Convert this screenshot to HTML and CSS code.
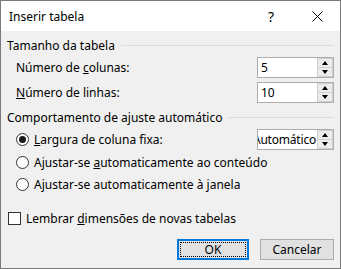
FILE: index.html
```html
<!DOCTYPE html>
<html lang="pt">
<head>
  <meta charset="UTF-8">
  <title>Inserir tabela</title>
  <link rel="stylesheet" href="styles.css">
</head>
<body>
  <div class="dialog">
    <div class="titlebar">
      <span class="title">Inserir tabela</span>
      <span class="cap-btn">?</span>
      <span class="cap-btn">
        <svg width="11" height="11" viewBox="0 0 11 11"><path d="M0.5 0.5 L10.5 10.5 M10.5 0.5 L0.5 10.5" stroke="#000" stroke-width="1" fill="none"/></svg>
      </span>
    </div>

    <div class="content">
      <div class="group-head first"><span>Tamanho da tabela</span><i class="rule"></i></div>
      <div class="row r-cols">
        <span class="label">Número de <u>c</u>olunas:</span>
        <div class="spin"><span class="val">5</span><span class="arrows"><b class="up"></b><b class="down"></b></span></div>
      </div>
      <div class="row r-rows">
        <span class="label"><u>N</u>úmero de linhas:</span>
        <div class="spin"><span class="val">10</span><span class="arrows"><b class="up"></b><b class="down"></b></span></div>
      </div>

      <div class="group-head second"><span>Comportamento de ajuste automático</span><i class="rule"></i></div>
      <div class="row r-opt1">
        <span class="option"><i class="radio checked"></i><span><u>L</u>argura de coluna fixa:</span></span>
        <div class="spin"><span class="val clip"><span>Automático</span></span><span class="arrows"><b class="up"></b><b class="down"></b></span></div>
      </div>
      <div class="row r-opt2">
        <span class="option"><i class="radio"></i><span>Ajustar-se <u>a</u>utomaticamente ao conteúdo</span></span>
      </div>
      <div class="row r-opt3">
        <span class="option"><i class="radio"></i><span>Ajustar-se automaticamente à <u>j</u>anela</span></span>
      </div>

      <div class="row r-check">
        <span class="option"><i class="check"></i><span>Lembrar <u>d</u>imensões de novas tabelas</span></span>
      </div>

      <div class="buttons">
        <button class="btn default"><span>OK</span></button>
        <button class="btn">Cancelar</button>
      </div>
    </div>
  </div>
</body>
</html>
```

FILE: styles.css
```css
body { margin: 0; font-family: "Noto Sans", sans-serif; font-size: 12px; color: #000; background: #fff; }
.dialog { width: 341px; height: 269px; box-sizing: border-box; border: 1px solid #7a7a7a; background: #f0f0f0; display: flex; flex-direction: column; }
.titlebar { height: 30px; background: #fff; display: flex; align-items: center; flex-shrink: 0; }
.title { flex: 1; padding-left: 8px; font-size: 12px; }
.cap-btn { width: 46px; height: 30px; display: flex; align-items: center; justify-content: center; font-size: 14px; }
.content { padding: 0 6px 0 6px; display: flex; flex-direction: column; }
.group-head { display: flex; align-items: center; height: 16px; gap: 6px; }
.group-head.first { margin-top: 6px; }
.group-head.second { margin-top: 6px; }
.rule { flex: 1; border-top: 1px solid #dcdcdc; margin-top: 0; }
.row { display: flex; align-items: center; justify-content: space-between; height: 21px; }
.label { padding-left: 9px; }
.r-cols { margin-top: 4px; }
.r-rows { margin-top: 4px; }
.r-opt1 { margin-top: 4px; }
.r-opt2 { margin-top: 2px; }
.r-opt3 { margin-top: 1px; }
.r-check { margin-top: 13px; }
.option { display: flex; align-items: center; padding-left: 9px; }
.r-check .option { padding-left: 1px; }
.radio { width: 11px; height: 11px; border: 1px solid #333; border-radius: 50%; background: #fff; margin-right: 5px; display: flex; align-items: center; justify-content: center; }
.radio.checked::after { content: ""; width: 7px; height: 7px; border-radius: 50%; background: #1a1a1a; }
.check { width: 11px; height: 11px; border: 1px solid #333; background: #fff; margin-right: 5px; }
.spin { width: 77px; height: 21px; box-sizing: border-box; border: 1px solid #adadad; background: #fff; display: flex; }
.val { flex: 1; padding-left: 3px; line-height: 19px; overflow: hidden; white-space: nowrap; }
.val.clip { display: flex; justify-content: flex-end; padding-left: 0; padding-right: 0; letter-spacing: -0.2px; }
.arrows { width: 16px; display: flex; flex-direction: column; background: #f0f0f0; border-left: 1px solid #fff; }
.arrows b { flex: 1; border: 1px solid #cfcfcf; background: #ececec; display: flex; align-items: center; justify-content: center; }
.arrows b + b { border-top: none; }
.up::after { content: ""; border-left: 3px solid transparent; border-right: 3px solid transparent; border-bottom: 4px solid #000; }
.down::after { content: ""; border-left: 3px solid transparent; border-right: 3px solid transparent; border-top: 4px solid #000; }
.buttons { display: flex; justify-content: flex-end; gap: 11px; margin-top: 10px; }
.btn { font-family: "Noto Sans", sans-serif; font-size: 12px; width: 74px; height: 21px; box-sizing: border-box; border: 1px solid #adadad; background: #e1e1e1; color: #000; padding: 0; }
.btn.default { width: 72px; border: 2px solid #0078d7; padding: 1px; }
.btn.default span { display: flex; align-items: center; justify-content: center; height: 100%; border: 1px dotted #000; box-sizing: border-box; }
```
